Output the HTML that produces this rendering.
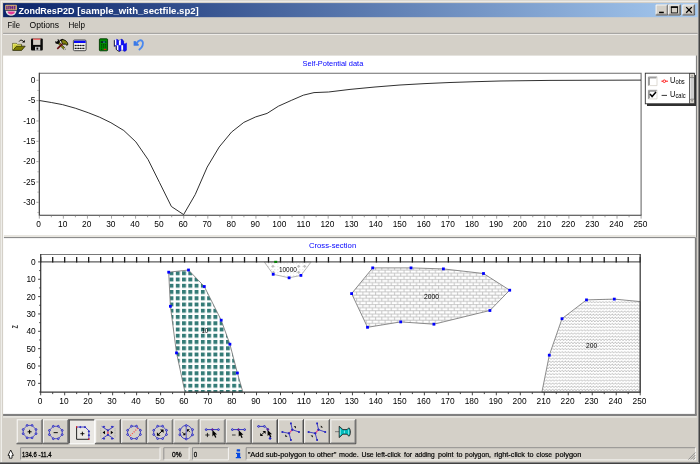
<!DOCTYPE html>
<html><head><meta charset="utf-8"><title>ZondResP2D</title>
<style>
html,body{margin:0;padding:0;background:#d4d0c8;overflow:hidden}
svg{display:block}
text{font-family:"Liberation Sans",sans-serif;fill:#000}
.ui{font-size:9.1px}
.ax{font-size:9px}
</style></head><body>
<svg width="700" height="464" viewBox="0 0 700 464" style="will-change:transform">
<defs>
<linearGradient id="tg" x1="0" x2="1" y1="0" y2="0"><stop offset="0" stop-color="#0a246a"/><stop offset="1" stop-color="#a6caf0"/></linearGradient>
<pattern id="pSq" patternUnits="userSpaceOnUse" x="175.8" y="271.3" width="6.27" height="6.25"><rect width="6.27" height="6.25" fill="#fff"/><rect x="0" y="0" width="3.9" height="3.9" fill="#347b77"/></pattern>
<pattern id="pBr" patternUnits="userSpaceOnUse" x="367.8" y="271.7" width="6.3" height="6.27"><rect width="6.3" height="6.27" fill="#fff"/><path d="M0 1.5H6.3M0 4.63H6.3 M1.5 1.5V4.63 M4.65 4.63V6.27 M4.65 0V1.5" stroke="#b8b8b8" stroke-width="0.8" fill="none"/></pattern>
<pattern id="pWv" patternUnits="userSpaceOnUse" x="580" y="300" width="3.13" height="3.13"><rect width="3.13" height="3.13" fill="#fff"/><path d="M0 2.2L0.78 1.4L2.35 2.9L3.13 2.2" stroke="#a0a0a0" stroke-width="0.7" fill="none"/></pattern>
<pattern id="pDt" patternUnits="userSpaceOnUse" x="264" y="262" width="3.13" height="3.13"><rect width="3.13" height="3.13" fill="#fff"/><rect x="1" y="1" width="0.8" height="0.8" fill="#c8c8c8"/></pattern>
</defs>

<rect width="700" height="464" fill="#d4d0c8"/>
<path d="M1.3 462V1.3H698" stroke="#f3f2ef" stroke-width="1.1" fill="none"/>
<rect x="698" y="0" width="1" height="464" fill="#868686"/><rect x="0" y="462" width="700" height="1" fill="#868686"/>
<rect x="699" y="0" width="1" height="464" fill="#424242"/><rect x="0" y="463" width="700" height="1" fill="#424242"/>
<rect x="3.1" y="3.1" width="694.6" height="14.1" fill="url(#tg)"/>
<text y="13.6" font-size="9.2" font-weight="bold" style="fill:#fff"><tspan x="18.4" textLength="56" lengthAdjust="spacingAndGlyphs">ZondResP2D</tspan> <tspan x="77.3" textLength="121.5" lengthAdjust="spacingAndGlyphs">[sample_with_sectfile.sp2]</tspan></text>
<text class="ui" x="7.6" y="28" textLength="12.3" lengthAdjust="spacingAndGlyphs">File</text>
<text class="ui" x="29.6" y="28" textLength="29.5" lengthAdjust="spacingAndGlyphs">Options</text>
<text class="ui" x="68.4" y="28" textLength="16.6" lengthAdjust="spacingAndGlyphs">Help</text>
<rect x="3.1" y="32.9" width="694.4" height="0.9" fill="#808080"/><rect x="3.1" y="33.8" width="694.4" height="0.8" fill="#fff"/>
<rect x="3.1" y="55.6" width="692.9" height="182" fill="#fff"/>
<rect x="3.1" y="237" width="691.8" height="177" fill="#fff"/>
<rect x="695.9" y="55.6" width="1.05" height="182" fill="#808080"/>
<rect x="694.9" y="238" width="1.8" height="177" fill="#808080"/>
<rect x="3.1" y="413.9" width="693.6" height="2.2" fill="#808080"/>
<rect x="3.1" y="416.1" width="693.6" height="1.6" fill="#e9e7e2"/>
<rect x="3.9" y="235" width="691.8" height="2.1" fill="#e8e6e0"/><rect x="3.9" y="237.1" width="691.8" height="1" fill="#808080"/>
<text x="302.6" y="65.6" font-size="7.9" style="fill:#0000ff" textLength="60.7" lengthAdjust="spacingAndGlyphs">Self-Potential data</text>
<path d="M39.3 73.3H641.1V215.25" stroke="#6c6c6c" stroke-width="1.1" fill="none"/>
<path d="M39.3 72.8V215.25H641.6" stroke="#383838" stroke-width="1.15" fill="none"/>
<path d="M36.4 80.30H38.8 M36.4 100.63H38.8 M36.4 120.97H38.8 M36.4 141.31H38.8 M36.4 161.64H38.8 M36.4 181.98H38.8 M36.4 202.31H38.8 M37.5 90.47H38.8 M37.5 110.80H38.8 M37.5 131.14H38.8 M37.5 151.47H38.8 M37.5 171.81H38.8 M37.5 192.14H38.8 M37.5 212.48H38.8 M39.30 215.75V218.65 M51.34 215.75V217.25 M63.37 215.75V218.65 M75.41 215.75V217.25 M87.44 215.75V218.65 M99.48 215.75V217.25 M111.52 215.75V218.65 M123.55 215.75V217.25 M135.59 215.75V218.65 M147.62 215.75V217.25 M159.66 215.75V218.65 M171.70 215.75V217.25 M183.73 215.75V218.65 M195.77 215.75V217.25 M207.80 215.75V218.65 M219.84 215.75V217.25 M231.88 215.75V218.65 M243.91 215.75V217.25 M255.95 215.75V218.65 M267.98 215.75V217.25 M280.02 215.75V218.65 M292.06 215.75V217.25 M304.09 215.75V218.65 M316.13 215.75V217.25 M328.16 215.75V218.65 M340.20 215.75V217.25 M352.24 215.75V218.65 M364.27 215.75V217.25 M376.31 215.75V218.65 M388.34 215.75V217.25 M400.38 215.75V218.65 M412.42 215.75V217.25 M424.45 215.75V218.65 M436.49 215.75V217.25 M448.52 215.75V218.65 M460.56 215.75V217.25 M472.60 215.75V218.65 M484.63 215.75V217.25 M496.67 215.75V218.65 M508.70 215.75V217.25 M520.74 215.75V218.65 M532.78 215.75V217.25 M544.81 215.75V218.65 M556.85 215.75V217.25 M568.88 215.75V218.65 M580.92 215.75V217.25 M592.96 215.75V218.65 M604.99 215.75V217.25 M617.03 215.75V218.65 M629.06 215.75V217.25 M641.10 215.75V218.65" stroke="#8c8c8c" stroke-width="0.8" fill="none"/>
<text class="ax" x="35.4" y="83.00" text-anchor="end" textLength="4.65" lengthAdjust="spacingAndGlyphs">0</text>
<text class="ax" x="35.4" y="103.33" text-anchor="end" textLength="7.44" lengthAdjust="spacingAndGlyphs">-5</text>
<text class="ax" x="35.4" y="123.67" text-anchor="end" textLength="12.09" lengthAdjust="spacingAndGlyphs">-10</text>
<text class="ax" x="35.4" y="144.00" text-anchor="end" textLength="12.09" lengthAdjust="spacingAndGlyphs">-15</text>
<text class="ax" x="35.4" y="164.34" text-anchor="end" textLength="12.09" lengthAdjust="spacingAndGlyphs">-20</text>
<text class="ax" x="35.4" y="184.68" text-anchor="end" textLength="12.09" lengthAdjust="spacingAndGlyphs">-25</text>
<text class="ax" x="35.4" y="205.01" text-anchor="end" textLength="12.09" lengthAdjust="spacingAndGlyphs">-30</text>
<text class="ax" x="38.60" y="226.9" text-anchor="middle" textLength="4.65" lengthAdjust="spacingAndGlyphs">0</text>
<text class="ax" x="62.67" y="226.9" text-anchor="middle" textLength="9.31" lengthAdjust="spacingAndGlyphs">10</text>
<text class="ax" x="86.74" y="226.9" text-anchor="middle" textLength="9.31" lengthAdjust="spacingAndGlyphs">20</text>
<text class="ax" x="110.82" y="226.9" text-anchor="middle" textLength="9.31" lengthAdjust="spacingAndGlyphs">30</text>
<text class="ax" x="134.89" y="226.9" text-anchor="middle" textLength="9.31" lengthAdjust="spacingAndGlyphs">40</text>
<text class="ax" x="158.96" y="226.9" text-anchor="middle" textLength="9.31" lengthAdjust="spacingAndGlyphs">50</text>
<text class="ax" x="183.03" y="226.9" text-anchor="middle" textLength="9.31" lengthAdjust="spacingAndGlyphs">60</text>
<text class="ax" x="207.10" y="226.9" text-anchor="middle" textLength="9.31" lengthAdjust="spacingAndGlyphs">70</text>
<text class="ax" x="231.18" y="226.9" text-anchor="middle" textLength="9.31" lengthAdjust="spacingAndGlyphs">80</text>
<text class="ax" x="255.25" y="226.9" text-anchor="middle" textLength="9.31" lengthAdjust="spacingAndGlyphs">90</text>
<text class="ax" x="279.32" y="226.9" text-anchor="middle" textLength="13.96" lengthAdjust="spacingAndGlyphs">100</text>
<text class="ax" x="303.39" y="226.9" text-anchor="middle" textLength="13.96" lengthAdjust="spacingAndGlyphs">110</text>
<text class="ax" x="327.46" y="226.9" text-anchor="middle" textLength="13.96" lengthAdjust="spacingAndGlyphs">120</text>
<text class="ax" x="351.54" y="226.9" text-anchor="middle" textLength="13.96" lengthAdjust="spacingAndGlyphs">130</text>
<text class="ax" x="375.61" y="226.9" text-anchor="middle" textLength="13.96" lengthAdjust="spacingAndGlyphs">140</text>
<text class="ax" x="399.68" y="226.9" text-anchor="middle" textLength="13.96" lengthAdjust="spacingAndGlyphs">150</text>
<text class="ax" x="423.75" y="226.9" text-anchor="middle" textLength="13.96" lengthAdjust="spacingAndGlyphs">160</text>
<text class="ax" x="447.82" y="226.9" text-anchor="middle" textLength="13.96" lengthAdjust="spacingAndGlyphs">170</text>
<text class="ax" x="471.90" y="226.9" text-anchor="middle" textLength="13.96" lengthAdjust="spacingAndGlyphs">180</text>
<text class="ax" x="495.97" y="226.9" text-anchor="middle" textLength="13.96" lengthAdjust="spacingAndGlyphs">190</text>
<text class="ax" x="520.04" y="226.9" text-anchor="middle" textLength="13.96" lengthAdjust="spacingAndGlyphs">200</text>
<text class="ax" x="544.11" y="226.9" text-anchor="middle" textLength="13.96" lengthAdjust="spacingAndGlyphs">210</text>
<text class="ax" x="568.18" y="226.9" text-anchor="middle" textLength="13.96" lengthAdjust="spacingAndGlyphs">220</text>
<text class="ax" x="592.26" y="226.9" text-anchor="middle" textLength="13.96" lengthAdjust="spacingAndGlyphs">230</text>
<text class="ax" x="616.33" y="226.9" text-anchor="middle" textLength="13.96" lengthAdjust="spacingAndGlyphs">240</text>
<text class="ax" x="640.40" y="226.9" text-anchor="middle" textLength="13.96" lengthAdjust="spacingAndGlyphs">250</text>
<polyline points="39.3,100.5 51.3,102.5 62.4,104.6 75.3,108.2 88.2,112.7 99.6,117.2 110.9,122.7 123.8,130.5 135.8,141.8 148.1,159.6 159.4,182.3 171.4,206.5 183.6,214.6 195.2,194.6 207.2,167.1 219.2,147 231.5,132.1 243.8,122.4 255.7,116.9 267.1,113.4 278.4,106.2 291.3,100.4 303.3,95.2 314,92.6 328.5,92 350,89.4 375,87 400,85 425,83.6 450,82.5 475,81.7 500,81 550,80.4 641,80.1" fill="none" stroke="#181818" stroke-width="0.9"/>
<rect x="647" y="75" width="49" height="31" fill="#303030"/>
<rect x="645.3" y="73.2" width="49" height="30.6" fill="#fff" stroke="#303030" stroke-width="0.9"/>
<rect x="689.65" y="73.6" width="4.8" height="29.8" fill="#cdcdcd" stroke="#2c2c2c" stroke-width="0.7"/>
<rect x="690" y="74" width="4.1" height="3.5" fill="#d8d5ce"/><rect x="690" y="99.3" width="4.1" height="3.8" fill="#d8d5ce"/>
<path d="M690 77.6H694.1M690 99.2H694.1" stroke="#555" stroke-width="0.6"/><path d="M690.5 78V99" stroke="#f2f2f2" stroke-width="0.6"/>
<path d="M691.2 76.3L692.05 75.2L692.9 76.3Z M691.2 100.6L692.05 101.7L692.9 100.6Z" fill="#333"/>
<rect x="648.4" y="77" width="8.8" height="8.8" fill="#fff"/>
<path d="M648.4 85.8V77H657.2" stroke="#8c8c8c" stroke-width="0.85" fill="none"/>
<path d="M649.3 85V77.9H656.4" stroke="#5a5a5a" stroke-width="0.7" fill="none"/>
<path d="M648.8 85.6H657V77.4" stroke="#d4d0c8" stroke-width="0.8" fill="none"/>
<rect x="648.4" y="90.3" width="8.8" height="8.8" fill="#fff"/>
<path d="M648.4 99.1V90.3H657.2" stroke="#8c8c8c" stroke-width="0.85" fill="none"/>
<path d="M649.3 98.3V91.2H656.4" stroke="#5a5a5a" stroke-width="0.7" fill="none"/>
<path d="M648.8 98.89999999999999H657V90.7" stroke="#d4d0c8" stroke-width="0.8" fill="none"/>
<path d="M650 94l2.1 2.5 3.9-4.4" stroke="#000" stroke-width="1.5" fill="none"/>
<path d="M661.4 81.2H668" stroke="#ff0000" stroke-width="0.9"/><circle cx="664.3" cy="81.2" r="1.3" fill="#fff" stroke="#ff0000" stroke-width="0.8"/>
<path d="M661.6 95.4H667" stroke="#202020" stroke-width="0.9"/>
<text transform="translate(670.1,83.4) scale(0.84,1)" font-size="8.8">U<tspan font-size="6.9" dy="0.7">obs</tspan></text>
<text transform="translate(670.1,97) scale(0.84,1)" font-size="8.8">U<tspan font-size="6.9" dy="0.7">calc</tspan></text>
<text x="308.9" y="247.6" font-size="7.9" style="fill:#0000ff" textLength="47.3" lengthAdjust="spacingAndGlyphs">Cross-section</text>
<polygon points="168.7,272.2 188.5,270 204.3,286.5 221.2,320.2 229.9,344.2 237.4,373 242.9,392.2 185,392.2 176.5,352.9 170.4,306.3" fill="url(#pSq)" stroke="#707070" stroke-width="0.8"/>
<rect x="167.3" y="270.8" width="2.8" height="2.8" fill="#0000ff"/>
<rect x="187.1" y="268.6" width="2.8" height="2.8" fill="#0000ff"/>
<rect x="202.9" y="285.1" width="2.8" height="2.8" fill="#0000ff"/>
<rect x="219.8" y="318.8" width="2.8" height="2.8" fill="#0000ff"/>
<rect x="228.5" y="342.8" width="2.8" height="2.8" fill="#0000ff"/>
<rect x="236.0" y="371.6" width="2.8" height="2.8" fill="#0000ff"/>
<rect x="175.1" y="351.5" width="2.8" height="2.8" fill="#0000ff"/>
<rect x="169.0" y="304.9" width="2.8" height="2.8" fill="#0000ff"/>
<polygon points="264.3,262 311.1,262 300.9,275.4 289.1,277.8 273.2,274.3" fill="url(#pDt)" stroke="#9c9c9c" stroke-width="0.75"/>
<path d="M271.29999999999995 266.3L272.9 264.7L274.5 266.3L272.9 267.90000000000003Z" fill="#bcbcbc"/>
<path d="M297.0 266.3L298.6 264.7L300.20000000000005 266.3L298.6 267.90000000000003Z" fill="#bcbcbc"/>
<path d="M303.0 266.3L304.6 264.7L306.20000000000005 266.3L304.6 267.90000000000003Z" fill="#bcbcbc"/>
<path d="M297.0 272.3L298.6 270.7L300.20000000000005 272.3L298.6 273.90000000000003Z" fill="#bcbcbc"/>
<path d="M271.79999999999995 272.3L273.4 270.7L275.0 272.3L273.4 273.90000000000003Z" fill="#bcbcbc"/>
<rect x="299.5" y="274.0" width="2.8" height="2.8" fill="#0000ff"/>
<rect x="287.7" y="276.4" width="2.8" height="2.8" fill="#0000ff"/>
<rect x="271.8" y="272.9" width="2.8" height="2.8" fill="#0000ff"/>
<polygon points="372.7,267.9 411,267.9 443.4,268.9 483.5,273.5 509.7,290.2 489.9,310.5 433.9,324.2 400.7,321.9 367.5,327.3 351.6,293.6" fill="url(#pBr)" stroke="#707070" stroke-width="0.8"/>
<rect x="371.3" y="266.5" width="2.8" height="2.8" fill="#0000ff"/>
<rect x="409.6" y="266.5" width="2.8" height="2.8" fill="#0000ff"/>
<rect x="442.0" y="267.5" width="2.8" height="2.8" fill="#0000ff"/>
<rect x="482.1" y="272.1" width="2.8" height="2.8" fill="#0000ff"/>
<rect x="508.3" y="288.8" width="2.8" height="2.8" fill="#0000ff"/>
<rect x="488.5" y="309.1" width="2.8" height="2.8" fill="#0000ff"/>
<rect x="432.5" y="322.8" width="2.8" height="2.8" fill="#0000ff"/>
<rect x="399.3" y="320.5" width="2.8" height="2.8" fill="#0000ff"/>
<rect x="366.1" y="325.9" width="2.8" height="2.8" fill="#0000ff"/>
<rect x="350.2" y="292.2" width="2.8" height="2.8" fill="#0000ff"/>
<polygon points="541.9,392.2 549.3,355.2 562,318.7 586.5,299.9 614.3,299.1 640.2,301.6 640.2,392.2" fill="url(#pWv)" stroke="#707070" stroke-width="0.8"/>
<rect x="547.9" y="353.8" width="2.8" height="2.8" fill="#0000ff"/>
<rect x="560.6" y="317.3" width="2.8" height="2.8" fill="#0000ff"/>
<rect x="585.1" y="298.5" width="2.8" height="2.8" fill="#0000ff"/>
<rect x="612.9" y="297.7" width="2.8" height="2.8" fill="#0000ff"/>
<rect x="279.2" y="265.6" width="17.6" height="6.6" fill="#fff"/>
<text x="287.9" y="271.6" font-size="7.9" text-anchor="middle" textLength="18" lengthAdjust="spacingAndGlyphs">10000</text>
<text x="204.8" y="332.6" font-size="7.4" text-anchor="middle" textLength="6.8" lengthAdjust="spacingAndGlyphs">10</text>
<text x="431.6" y="299.3" font-size="7.4" text-anchor="middle" textLength="15" lengthAdjust="spacingAndGlyphs">2000</text>
<text x="591.6" y="347.9" font-size="7.4" text-anchor="middle" textLength="11.2" lengthAdjust="spacingAndGlyphs">200</text>
<path d="M40.7 254.55H640.2" stroke="#787878" stroke-width="1.1" fill="none"/>
<path d="M40.7 261.9H640.2" stroke="#5c5c5c" stroke-width="1.4" fill="none"/>
<path d="M40.70 257.1V262.4 M52.69 257.1V262.4 M64.68 257.1V262.4 M76.67 257.1V262.4 M88.66 257.1V262.4 M100.65 257.1V262.4 M112.64 257.1V262.4 M124.63 257.1V262.4 M136.62 257.1V262.4 M148.61 257.1V262.4 M160.60 257.1V262.4 M172.59 257.1V262.4 M184.58 257.1V262.4 M196.57 257.1V262.4 M208.56 257.1V262.4 M220.55 257.1V262.4 M232.54 257.1V262.4 M244.53 257.1V262.4 M256.52 257.1V262.4 M268.51 257.1V262.4 M280.50 257.1V262.4 M292.49 257.1V262.4 M304.48 257.1V262.4 M316.47 257.1V262.4 M328.46 257.1V262.4 M340.45 257.1V262.4 M352.44 257.1V262.4 M364.43 257.1V262.4 M376.42 257.1V262.4 M388.41 257.1V262.4 M400.40 257.1V262.4 M412.39 257.1V262.4 M424.38 257.1V262.4 M436.37 257.1V262.4 M448.36 257.1V262.4 M460.35 257.1V262.4 M472.34 257.1V262.4 M484.33 257.1V262.4 M496.32 257.1V262.4 M508.31 257.1V262.4 M520.30 257.1V262.4 M532.29 257.1V262.4 M544.28 257.1V262.4 M556.27 257.1V262.4 M568.26 257.1V262.4 M580.25 257.1V262.4 M592.24 257.1V262.4 M604.23 257.1V262.4 M616.22 257.1V262.4 M628.21 257.1V262.4 M640.20 257.1V262.4" stroke="#1c1c1c" stroke-width="1.3" fill="none"/>
<path d="M40.7 254.05V392.2H640.2V254.05" stroke="#3a3a3a" stroke-width="1.25" fill="none"/>
<rect x="274.2" y="260.8" width="3" height="2.1" fill="#008000"/>
<path d="M38.1 261.90H40.7 M39.2 270.57H40.7 M38.1 279.25H40.7 M39.2 287.92H40.7 M38.1 296.60H40.7 M39.2 305.27H40.7 M38.1 313.95H40.7 M39.2 322.62H40.7 M38.1 331.30H40.7 M39.2 339.97H40.7 M38.1 348.65H40.7 M39.2 357.32H40.7 M38.1 366.00H40.7 M39.2 374.67H40.7 M38.1 383.35H40.7 M39.2 392.02H40.7 M40.70 392.2v3.1 M52.69 392.2v1.9 M64.68 392.2v3.1 M76.67 392.2v1.9 M88.66 392.2v3.1 M100.65 392.2v1.9 M112.64 392.2v3.1 M124.63 392.2v1.9 M136.62 392.2v3.1 M148.61 392.2v1.9 M160.60 392.2v3.1 M172.59 392.2v1.9 M184.58 392.2v3.1 M196.57 392.2v1.9 M208.56 392.2v3.1 M220.55 392.2v1.9 M232.54 392.2v3.1 M244.53 392.2v1.9 M256.52 392.2v3.1 M268.51 392.2v1.9 M280.50 392.2v3.1 M292.49 392.2v1.9 M304.48 392.2v3.1 M316.47 392.2v1.9 M328.46 392.2v3.1 M340.45 392.2v1.9 M352.44 392.2v3.1 M364.43 392.2v1.9 M376.42 392.2v3.1 M388.41 392.2v1.9 M400.40 392.2v3.1 M412.39 392.2v1.9 M424.38 392.2v3.1 M436.37 392.2v1.9 M448.36 392.2v3.1 M460.35 392.2v1.9 M472.34 392.2v3.1 M484.33 392.2v1.9 M496.32 392.2v3.1 M508.31 392.2v1.9 M520.30 392.2v3.1 M532.29 392.2v1.9 M544.28 392.2v3.1 M556.27 392.2v1.9 M568.26 392.2v3.1 M580.25 392.2v1.9 M592.24 392.2v3.1 M604.23 392.2v1.9 M616.22 392.2v3.1 M628.21 392.2v1.9 M640.20 392.2v3.1" stroke="#303030" stroke-width="0.9" fill="none"/>
<text class="ax" x="35.7" y="264.90" text-anchor="end" textLength="4.65" lengthAdjust="spacingAndGlyphs">0</text>
<text class="ax" x="35.7" y="282.25" text-anchor="end" textLength="9.31" lengthAdjust="spacingAndGlyphs">10</text>
<text class="ax" x="35.7" y="299.60" text-anchor="end" textLength="9.31" lengthAdjust="spacingAndGlyphs">20</text>
<text class="ax" x="35.7" y="316.95" text-anchor="end" textLength="9.31" lengthAdjust="spacingAndGlyphs">30</text>
<text class="ax" x="35.7" y="334.30" text-anchor="end" textLength="9.31" lengthAdjust="spacingAndGlyphs">40</text>
<text class="ax" x="35.7" y="351.65" text-anchor="end" textLength="9.31" lengthAdjust="spacingAndGlyphs">50</text>
<text class="ax" x="35.7" y="369.00" text-anchor="end" textLength="9.31" lengthAdjust="spacingAndGlyphs">60</text>
<text class="ax" x="35.7" y="386.35" text-anchor="end" textLength="9.31" lengthAdjust="spacingAndGlyphs">70</text>
<text class="ax" x="40.00" y="403.9" text-anchor="middle" textLength="4.65" lengthAdjust="spacingAndGlyphs">0</text>
<text class="ax" x="63.98" y="403.9" text-anchor="middle" textLength="9.31" lengthAdjust="spacingAndGlyphs">10</text>
<text class="ax" x="87.96" y="403.9" text-anchor="middle" textLength="9.31" lengthAdjust="spacingAndGlyphs">20</text>
<text class="ax" x="111.94" y="403.9" text-anchor="middle" textLength="9.31" lengthAdjust="spacingAndGlyphs">30</text>
<text class="ax" x="135.92" y="403.9" text-anchor="middle" textLength="9.31" lengthAdjust="spacingAndGlyphs">40</text>
<text class="ax" x="159.90" y="403.9" text-anchor="middle" textLength="9.31" lengthAdjust="spacingAndGlyphs">50</text>
<text class="ax" x="183.88" y="403.9" text-anchor="middle" textLength="9.31" lengthAdjust="spacingAndGlyphs">60</text>
<text class="ax" x="207.86" y="403.9" text-anchor="middle" textLength="9.31" lengthAdjust="spacingAndGlyphs">70</text>
<text class="ax" x="231.84" y="403.9" text-anchor="middle" textLength="9.31" lengthAdjust="spacingAndGlyphs">80</text>
<text class="ax" x="255.82" y="403.9" text-anchor="middle" textLength="9.31" lengthAdjust="spacingAndGlyphs">90</text>
<text class="ax" x="279.80" y="403.9" text-anchor="middle" textLength="13.96" lengthAdjust="spacingAndGlyphs">100</text>
<text class="ax" x="303.78" y="403.9" text-anchor="middle" textLength="13.96" lengthAdjust="spacingAndGlyphs">110</text>
<text class="ax" x="327.76" y="403.9" text-anchor="middle" textLength="13.96" lengthAdjust="spacingAndGlyphs">120</text>
<text class="ax" x="351.74" y="403.9" text-anchor="middle" textLength="13.96" lengthAdjust="spacingAndGlyphs">130</text>
<text class="ax" x="375.72" y="403.9" text-anchor="middle" textLength="13.96" lengthAdjust="spacingAndGlyphs">140</text>
<text class="ax" x="399.70" y="403.9" text-anchor="middle" textLength="13.96" lengthAdjust="spacingAndGlyphs">150</text>
<text class="ax" x="423.68" y="403.9" text-anchor="middle" textLength="13.96" lengthAdjust="spacingAndGlyphs">160</text>
<text class="ax" x="447.66" y="403.9" text-anchor="middle" textLength="13.96" lengthAdjust="spacingAndGlyphs">170</text>
<text class="ax" x="471.64" y="403.9" text-anchor="middle" textLength="13.96" lengthAdjust="spacingAndGlyphs">180</text>
<text class="ax" x="495.62" y="403.9" text-anchor="middle" textLength="13.96" lengthAdjust="spacingAndGlyphs">190</text>
<text class="ax" x="519.60" y="403.9" text-anchor="middle" textLength="13.96" lengthAdjust="spacingAndGlyphs">200</text>
<text class="ax" x="543.58" y="403.9" text-anchor="middle" textLength="13.96" lengthAdjust="spacingAndGlyphs">210</text>
<text class="ax" x="567.56" y="403.9" text-anchor="middle" textLength="13.96" lengthAdjust="spacingAndGlyphs">220</text>
<text class="ax" x="591.54" y="403.9" text-anchor="middle" textLength="13.96" lengthAdjust="spacingAndGlyphs">230</text>
<text class="ax" x="615.52" y="403.9" text-anchor="middle" textLength="13.96" lengthAdjust="spacingAndGlyphs">240</text>
<text class="ax" x="639.50" y="403.9" text-anchor="middle" textLength="13.96" lengthAdjust="spacingAndGlyphs">250</text>
<text x="0" y="0" font-size="10.4" font-weight="bold" text-anchor="middle" style="fill:#4a4a4a" transform="translate(17.9,326.9) rotate(-90) scale(0.66,1)">z</text>
<g>
<rect x="5.1" y="4.8" width="11.9" height="5.5" rx="0.9" fill="#c9a473"/>
<path d="M6.9 6v3.3 M8.9 6v3.3 M10.8 6v3.3 M12.7 6v3.3 M14.7 6v3.3" stroke="#5a148a" stroke-width="1.25" opacity="0.9"/><path d="M6.3 8.9H7.6M8.6 6.3H9.8M10.4 7.6H13.2M14.2 6.3H15.4" stroke="#5a148a" stroke-width="0.8" opacity="0.75"/>
<path d="M5.7 10.7H16.5C16.3 13.4 14.4 15.7 11.1 15.7C7.8 15.7 5.9 13.4 5.7 10.7Z" fill="#e2e2e2"/>
<path d="M5.6 10.5H16.6" stroke="#4a4a4a" stroke-width="0.6"/>
<path d="M7.7 11.6H14.7V12.6C14.3 13.8 13 14.4 11.2 14.4C9.4 14.4 8.1 13.8 7.7 12.6Z" fill="#e63a98"/>
<path d="M7.8 16.2H14.4" stroke="#111" stroke-width="0.7" opacity="0.55"/>
</g>
<rect x="655.7" y="4.6" width="12.5" height="10.8" fill="#d4d0c8"/>
<path d="M656.1 15.4V5.0H668.2" stroke="#fff" stroke-width="0.8" fill="none"/>
<path d="M667.8000000000001 4.6V15.0H655.7" stroke="#404040" stroke-width="0.8" fill="none"/>
<path d="M667.0 5.3999999999999995V14.200000000000001H656.5" stroke="#808080" stroke-width="0.8" fill="none"/>
<rect x="668.2" y="4.6" width="12.5" height="10.8" fill="#d4d0c8"/>
<path d="M668.6 15.4V5.0H680.7" stroke="#fff" stroke-width="0.8" fill="none"/>
<path d="M680.3000000000001 4.6V15.0H668.2" stroke="#404040" stroke-width="0.8" fill="none"/>
<path d="M679.5 5.3999999999999995V14.200000000000001H669.0" stroke="#808080" stroke-width="0.8" fill="none"/>
<rect x="682.4" y="4.6" width="12.6" height="10.8" fill="#d4d0c8"/>
<path d="M682.8 15.4V5.0H695.0" stroke="#fff" stroke-width="0.8" fill="none"/>
<path d="M694.6 4.6V15.0H682.4" stroke="#404040" stroke-width="0.8" fill="none"/>
<path d="M693.8 5.3999999999999995V14.200000000000001H683.1999999999999" stroke="#808080" stroke-width="0.8" fill="none"/>
<rect x="659.1" y="11.7" width="4.7" height="1.5" fill="#000"/>
<rect x="671.3" y="7" width="6.3" height="5.9" fill="none" stroke="#000" stroke-width="0.8"/><rect x="670.9" y="6.4" width="7.1" height="1.5" fill="#000"/>
<path d="M686.2 7.1L691.8 12.7M691.8 7.1L686.2 12.7" stroke="#000" stroke-width="1.3"/>
<path d="M12.6 50.2V43.4H16.4L17.4 44.4H21.6V46.4" fill="#d2d23c" stroke="#3a3a10" stroke-width="0.7"/>
<path d="M12.8 50.4L16.6 46.2H25.2L21.6 50.4Z" fill="#7c7c00" stroke="#1a1a00" stroke-width="0.7"/>
<path d="M13.2 49.4V44H16.2L17.2 45H21" fill="none" stroke="#ffff9a" stroke-width="0.6"/>
<path d="M19.2 41.4C20.2 39.8 22.4 39.6 23.8 42" fill="none" stroke="#000" stroke-width="1"/><path d="M22 42.6H24.8V40Z" fill="#000"/>
<rect x="31" y="38.6" width="11.8" height="12" rx="1" fill="#0a0a0a"/>
<rect x="33.1" y="38.7" width="7.3" height="6.2" fill="#d4d0c8"/><rect x="33.1" y="38.6" width="7.3" height="1.2" fill="#f05858"/>
<rect x="35" y="46.8" width="5.2" height="3.8" fill="#c8c8c8"/><rect x="36.5" y="47.6" width="1.7" height="2" fill="#0a0a0a"/>
<path d="M58.8 43L64.6 49" stroke="#1c1c00" stroke-width="2.3"/><path d="M58.8 43L64.4 48.8" stroke="#9a9a1c" stroke-width="1.2"/>
<path d="M64.4 48.4L65.6 49.6" stroke="#e8e8e8" stroke-width="1.3"/><path d="M64.9 49.9L66 48.9" stroke="#222" stroke-width="0.5"/>
<circle cx="57.5" cy="41.7" r="2.4" fill="#080808"/><circle cx="56.3" cy="40.2" r="1.45" fill="#d4d0c8"/>
<path d="M57.3 48.9L62.7 43.5" stroke="#66080f" stroke-width="1.55"/>
<path d="M60.4 40.3L62.6 39.4L65.6 40.6L67.6 43L67.8 44.8L66.4 45.2L65.4 43.8L63.6 44.4L62 42.6L61.6 41.2Z" fill="#84840e" stroke="#0c0c00" stroke-width="0.9" stroke-linejoin="round"/>
<path d="M60.2 40.4L62.8 39.5" stroke="#000" stroke-width="1.1"/>
<rect x="73.4" y="40" width="12.7" height="10.7" rx="1.2" fill="#e6e6e6" stroke="#4c4c4c" stroke-width="1"/>
<rect x="74" y="40.7" width="11.6" height="2.3" fill="#0808f8"/>
<path d="M74.2 43.5H85.4" stroke="#f4f4e0" stroke-width="0.7"/>
<path d="M79.4 43.2V50" stroke="#fff" stroke-width="1"/><path d="M77 43.4V50M82 43.4V50" stroke="#f8f8f8" stroke-width="0.7"/>
<path d="M74.6 45.5H84.8M74.6 48.4H84.8" stroke="#6a6a6a" stroke-width="0.9"/>
<rect x="74.89999999999999" y="44.9" width="1.4" height="1.2" fill="#181818"/>
<rect x="74.89999999999999" y="47.8" width="1.4" height="1.2" fill="#181818"/>
<rect x="77.6" y="44.9" width="1.4" height="1.2" fill="#181818"/>
<rect x="77.6" y="47.8" width="1.4" height="1.2" fill="#181818"/>
<rect x="79.8" y="44.9" width="1.4" height="1.2" fill="#181818"/>
<rect x="79.8" y="47.8" width="1.4" height="1.2" fill="#181818"/>
<rect x="82.5" y="44.9" width="1.4" height="1.2" fill="#181818"/>
<rect x="82.5" y="47.8" width="1.4" height="1.2" fill="#181818"/>
<rect x="99.4" y="38.8" width="8.2" height="12" rx="0.8" fill="#008a00" stroke="#003800" stroke-width="0.9"/>
<rect x="100.8" y="41.2" width="5.4" height="1.8" fill="#062a20"/><rect x="103" y="41.6" width="2.2" height="1" fill="#30a0a0"/>
<path d="M101 44.9h1.2M103 44.9h1.2M105 44.9h1.2M101 47h1.2M103 47h1.2M105 47h1.2M101 49.2h1.2" stroke="#003a00" stroke-width="1.1"/><rect x="103.8" y="48.8" width="2.4" height="1.2" fill="#e02010"/>
<clipPath id="wc"><path d="M114.3 40.2L115.4 39.2L116.6 38.9L117.8 39.4L119 40.5L120.2 39.4L121.5 38.9L122.8 39.6L124 41.6V43.6L125.4 43.6L126.8 42.6V50L125.6 51.2L124.4 51.5L123.2 50.8L122 49.8L120.8 50.9L119.6 51.5L118.2 51L116.2 49.4V46L115.2 46.6L114.3 46.6Z"/></clipPath>
<g clip-path="url(#wc)"><rect x="113" y="38" width="15" height="14" fill="#1212f0"/>
<rect x="114.7" y="38" width="1.6" height="7.2" fill="#fff"/><rect x="118.9" y="38" width="1.9" height="7.2" fill="#fff"/>
<rect x="116.7" y="45.2" width="1.7" height="7" fill="#fff"/><rect x="121.3" y="45.2" width="1.8" height="7" fill="#fff"/>
</g>
<path d="M114.3 40.2V46.6M116.2 46V49.4L118.2 51L119.6 51.5" stroke="#111" stroke-width="0.8" fill="none"/>
<path d="M116.6 38.9L119 40.5L121.5 38.9L124 41.6M119.6 51.5L122 49.8L124.4 51.5L126.8 50" stroke="#202060" stroke-width="0.5" fill="none" opacity="0.6"/>
<path d="M133.6 41.2L135.4 41L138.9 44.6L138.6 45.8H133.6Z" fill="#3a78e6"/>
<path d="M137 42.8C138.4 40.2 141.4 39.4 142.6 41.6C143.7 43.8 142.4 47.4 139.4 49.5" fill="none" stroke="#4a88ee" stroke-width="1.9" stroke-linecap="round"/>
<path d="M17.25 443.7V419.7H42.2" stroke="#f8f7f5" stroke-width="1.1" fill="none"/>
<path d="M42.25 419.3V443.75H16.5" stroke="#404040" stroke-width="1" fill="none"/>
<path d="M41.400000000000006 420.1V442.9H17.3" stroke="#808080" stroke-width="0.9" fill="none"/>
<path d="M43.379999999999995 443.7V419.7H68.33" stroke="#f8f7f5" stroke-width="1.1" fill="none"/>
<path d="M68.38 419.3V443.75H42.629999999999995" stroke="#404040" stroke-width="1" fill="none"/>
<path d="M67.53 420.1V442.9H43.42999999999999" stroke="#808080" stroke-width="0.9" fill="none"/>
<rect x="68.75999999999999" y="419.3" width="26.2" height="24.899999999999977" fill="#eae8e4"/>
<path d="M69.25999999999999 444.2V419.8H94.96" stroke="#4a4a4a" stroke-width="1.2" fill="none"/>
<path d="M94.55999999999999 419.3V443.8H68.75999999999999" stroke="#fff" stroke-width="0.9" fill="none"/>
<path d="M95.64 443.7V419.7H120.59" stroke="#f8f7f5" stroke-width="1.1" fill="none"/>
<path d="M120.64 419.3V443.75H94.89" stroke="#404040" stroke-width="1" fill="none"/>
<path d="M119.79 420.1V442.9H95.69" stroke="#808080" stroke-width="0.9" fill="none"/>
<path d="M121.77 443.7V419.7H146.72" stroke="#f8f7f5" stroke-width="1.1" fill="none"/>
<path d="M146.77 419.3V443.75H121.02" stroke="#404040" stroke-width="1" fill="none"/>
<path d="M145.92 420.1V442.9H121.82" stroke="#808080" stroke-width="0.9" fill="none"/>
<path d="M147.9 443.7V419.7H172.85" stroke="#f8f7f5" stroke-width="1.1" fill="none"/>
<path d="M172.9 419.3V443.75H147.15" stroke="#404040" stroke-width="1" fill="none"/>
<path d="M172.04999999999998 420.1V442.9H147.95000000000002" stroke="#808080" stroke-width="0.9" fill="none"/>
<path d="M174.03 443.7V419.7H198.98" stroke="#f8f7f5" stroke-width="1.1" fill="none"/>
<path d="M199.03 419.3V443.75H173.28" stroke="#404040" stroke-width="1" fill="none"/>
<path d="M198.17999999999998 420.1V442.9H174.08" stroke="#808080" stroke-width="0.9" fill="none"/>
<path d="M200.16 443.7V419.7H225.10999999999999" stroke="#f8f7f5" stroke-width="1.1" fill="none"/>
<path d="M225.16 419.3V443.75H199.41" stroke="#404040" stroke-width="1" fill="none"/>
<path d="M224.30999999999997 420.1V442.9H200.21" stroke="#808080" stroke-width="0.9" fill="none"/>
<path d="M226.29 443.7V419.7H251.23999999999998" stroke="#f8f7f5" stroke-width="1.1" fill="none"/>
<path d="M251.29 419.3V443.75H225.54" stroke="#404040" stroke-width="1" fill="none"/>
<path d="M250.43999999999997 420.1V442.9H226.34" stroke="#808080" stroke-width="0.9" fill="none"/>
<path d="M252.42 443.7V419.7H277.37" stroke="#f8f7f5" stroke-width="1.1" fill="none"/>
<path d="M277.42 419.3V443.75H251.67" stroke="#404040" stroke-width="1" fill="none"/>
<path d="M276.57 420.1V442.9H252.47" stroke="#808080" stroke-width="0.9" fill="none"/>
<path d="M278.55 443.7V419.7H303.5" stroke="#f8f7f5" stroke-width="1.1" fill="none"/>
<path d="M303.55 419.3V443.75H277.8" stroke="#404040" stroke-width="1" fill="none"/>
<path d="M302.7 420.1V442.9H278.6" stroke="#808080" stroke-width="0.9" fill="none"/>
<path d="M304.68 443.7V419.7H329.63" stroke="#f8f7f5" stroke-width="1.1" fill="none"/>
<path d="M329.68 419.3V443.75H303.93" stroke="#404040" stroke-width="1" fill="none"/>
<path d="M328.83 420.1V442.9H304.73" stroke="#808080" stroke-width="0.9" fill="none"/>
<path d="M330.81 443.7V419.7H355.76" stroke="#f8f7f5" stroke-width="1.1" fill="none"/>
<path d="M355.81 419.3V443.75H330.06" stroke="#404040" stroke-width="1" fill="none"/>
<path d="M354.96 420.1V442.9H330.86" stroke="#808080" stroke-width="0.9" fill="none"/>
<polygon points="27.10,425.40 32.10,425.40 36.00,429.50 36.00,433.70 32.10,437.80 27.10,437.80 23.20,433.70 23.20,429.50" fill="none" stroke="#2222c0" stroke-width="0.7"/>
<circle cx="27.10" cy="425.40" r="0.9" fill="#b8b8e0" stroke="#2222c0" stroke-width="0.9"/>
<circle cx="32.10" cy="425.40" r="0.9" fill="#b8b8e0" stroke="#2222c0" stroke-width="0.9"/>
<circle cx="36.00" cy="429.50" r="0.9" fill="#b8b8e0" stroke="#2222c0" stroke-width="0.9"/>
<circle cx="36.00" cy="433.70" r="0.9" fill="#b8b8e0" stroke="#2222c0" stroke-width="0.9"/>
<circle cx="32.10" cy="437.80" r="0.9" fill="#b8b8e0" stroke="#2222c0" stroke-width="0.9"/>
<circle cx="27.10" cy="437.80" r="0.9" fill="#b8b8e0" stroke="#2222c0" stroke-width="0.9"/>
<circle cx="23.20" cy="433.70" r="0.9" fill="#b8b8e0" stroke="#2222c0" stroke-width="0.9"/>
<circle cx="23.20" cy="429.50" r="0.9" fill="#b8b8e0" stroke="#2222c0" stroke-width="0.9"/>
<path d="M27.6 431.8H31.6M29.6 429.8V433.8" stroke="#000" stroke-width="1"/>
<polygon points="53.30,426.30 58.30,426.30 62.20,430.40 62.20,434.60 58.30,438.70 53.30,438.70 49.40,434.60 49.40,430.40" fill="none" stroke="#2222c0" stroke-width="0.7"/>
<circle cx="53.30" cy="426.30" r="0.9" fill="#b8b8e0" stroke="#2222c0" stroke-width="0.9"/>
<circle cx="58.30" cy="426.30" r="0.9" fill="#b8b8e0" stroke="#2222c0" stroke-width="0.9"/>
<circle cx="62.20" cy="430.40" r="0.9" fill="#b8b8e0" stroke="#2222c0" stroke-width="0.9"/>
<circle cx="62.20" cy="434.60" r="0.9" fill="#b8b8e0" stroke="#2222c0" stroke-width="0.9"/>
<circle cx="58.30" cy="438.70" r="0.9" fill="#b8b8e0" stroke="#2222c0" stroke-width="0.9"/>
<circle cx="53.30" cy="438.70" r="0.9" fill="#b8b8e0" stroke="#2222c0" stroke-width="0.9"/>
<circle cx="49.40" cy="434.60" r="0.9" fill="#b8b8e0" stroke="#2222c0" stroke-width="0.9"/>
<circle cx="49.40" cy="430.40" r="0.9" fill="#b8b8e0" stroke="#2222c0" stroke-width="0.9"/>
<path d="M53.6 432.6H57.8" stroke="#202020" stroke-width="1.1"/>
<path d="M76.6 427V439.3H88.9" stroke="#101010" stroke-width="0.9" fill="none"/>
<path d="M76.6 427H85L88.9 430.8V439.3" stroke="#2222c0" stroke-width="0.8" fill="none"/>
<circle cx="80.30" cy="427.10" r="0.6" fill="#2222c0" stroke="#2222c0" stroke-width="0.9"/>
<circle cx="85.00" cy="427.10" r="0.6" fill="#2222c0" stroke="#2222c0" stroke-width="0.9"/>
<circle cx="88.90" cy="431.30" r="0.6" fill="#2222c0" stroke="#2222c0" stroke-width="0.9"/>
<circle cx="88.90" cy="435.20" r="0.6" fill="#2222c0" stroke="#2222c0" stroke-width="0.9"/>
<rect x="76" y="426.2" width="1.2" height="1.6" fill="#e01010"/><rect x="88.2" y="438.4" width="1.4" height="1.4" fill="#e01010"/>
<path d="M80.4 433.7H84.4M82.4 431.7V435.7" stroke="#000" stroke-width="0.9"/>
<path d="M101.7 426.4L107.9 430.4M114.1 426.4L107.9 430.4M101.7 439L107.9 434.8M114.1 439L107.9 434.8M107.9 430.4V434.8" stroke="#2222c0" stroke-width="0.8" fill="none"/>
<path d="M107.9 431.4V433.8" stroke="#ff6060" stroke-width="1.5"/>
<circle cx="104.00" cy="426.70" r="0.6" fill="#2222c0" stroke="#2222c0" stroke-width="0.9"/>
<circle cx="112.00" cy="426.70" r="0.6" fill="#2222c0" stroke="#2222c0" stroke-width="0.9"/>
<circle cx="104.00" cy="438.70" r="0.6" fill="#2222c0" stroke="#2222c0" stroke-width="0.9"/>
<circle cx="112.00" cy="438.70" r="0.6" fill="#2222c0" stroke="#2222c0" stroke-width="0.9"/>
<circle cx="107.90" cy="430.30" r="0.6" fill="#2222c0" stroke="#2222c0" stroke-width="0.9"/>
<circle cx="107.90" cy="434.90" r="0.6" fill="#2222c0" stroke="#2222c0" stroke-width="0.9"/>
<path d="M102.6 432.5L105 430.8V434.2Z M113.2 432.5L110.8 430.8V434.2Z" fill="#000"/>
<path d="M100.8 428.5V437.5M115 428.5V437.5" stroke="#9a9a9a" stroke-width="0.7" stroke-dasharray="0.8 0.8"/>
<polygon points="131.50,426.20 136.50,426.20 140.40,430.30 140.40,434.50 136.50,438.60 131.50,438.60 127.60,434.50 127.60,430.30" fill="none" stroke="#2222c0" stroke-width="0.7"/>
<circle cx="131.50" cy="426.20" r="0.9" fill="#b8b8e0" stroke="#2222c0" stroke-width="0.9"/>
<circle cx="136.50" cy="426.20" r="0.9" fill="#b8b8e0" stroke="#2222c0" stroke-width="0.9"/>
<circle cx="140.40" cy="430.30" r="0.9" fill="#b8b8e0" stroke="#2222c0" stroke-width="0.9"/>
<circle cx="140.40" cy="434.50" r="0.9" fill="#b8b8e0" stroke="#2222c0" stroke-width="0.9"/>
<circle cx="136.50" cy="438.60" r="0.9" fill="#b8b8e0" stroke="#2222c0" stroke-width="0.9"/>
<circle cx="131.50" cy="438.60" r="0.9" fill="#b8b8e0" stroke="#2222c0" stroke-width="0.9"/>
<circle cx="127.60" cy="434.50" r="0.9" fill="#b8b8e0" stroke="#2222c0" stroke-width="0.9"/>
<circle cx="127.60" cy="430.30" r="0.9" fill="#b8b8e0" stroke="#2222c0" stroke-width="0.9"/>
<path d="M130.3 435.6L138 428" stroke="#ff4848" stroke-width="1.2" stroke-dasharray="1.1 1.3"/>
<polygon points="157.60,426.20 162.60,426.20 166.50,430.30 166.50,434.50 162.60,438.60 157.60,438.60 153.70,434.50 153.70,430.30" fill="none" stroke="#2222c0" stroke-width="0.7"/>
<circle cx="157.60" cy="426.20" r="0.9" fill="#b8b8e0" stroke="#2222c0" stroke-width="0.9"/>
<circle cx="162.60" cy="426.20" r="0.9" fill="#b8b8e0" stroke="#2222c0" stroke-width="0.9"/>
<circle cx="166.50" cy="430.30" r="0.9" fill="#b8b8e0" stroke="#2222c0" stroke-width="0.9"/>
<circle cx="166.50" cy="434.50" r="0.9" fill="#b8b8e0" stroke="#2222c0" stroke-width="0.9"/>
<circle cx="162.60" cy="438.60" r="0.9" fill="#b8b8e0" stroke="#2222c0" stroke-width="0.9"/>
<circle cx="157.60" cy="438.60" r="0.9" fill="#b8b8e0" stroke="#2222c0" stroke-width="0.9"/>
<circle cx="153.70" cy="434.50" r="0.9" fill="#b8b8e0" stroke="#2222c0" stroke-width="0.9"/>
<circle cx="153.70" cy="430.30" r="0.9" fill="#b8b8e0" stroke="#2222c0" stroke-width="0.9"/>
<path d="M158.4 434.4L162.2 430.8" stroke="#000" stroke-width="1"/><path d="M163.6 429.4V433L160 429.4Z M156.9 435.8V432.2L160.5 435.8Z" fill="#000"/>
<ellipse cx="186.2" cy="432.2" rx="6.2" ry="6.8" fill="none" stroke="#2222c0" stroke-width="0.8"/>
<path d="M186.2 425.5V439" stroke="#2222c0" stroke-width="0.7"/>
<circle cx="186.20" cy="425.50" r="0.9" fill="#b8b8e0" stroke="#2222c0" stroke-width="0.9"/>
<circle cx="186.20" cy="439.00" r="0.9" fill="#b8b8e0" stroke="#2222c0" stroke-width="0.9"/>
<circle cx="179.80" cy="429.60" r="0.9" fill="#b8b8e0" stroke="#2222c0" stroke-width="0.9"/>
<circle cx="179.80" cy="434.80" r="0.9" fill="#b8b8e0" stroke="#2222c0" stroke-width="0.9"/>
<circle cx="192.60" cy="429.60" r="0.9" fill="#b8b8e0" stroke="#2222c0" stroke-width="0.9"/>
<circle cx="192.60" cy="434.80" r="0.9" fill="#b8b8e0" stroke="#2222c0" stroke-width="0.9"/>
<path d="M185.4 432.4V435.2H182.6Z M187 432V429.2H189.8Z" fill="#000"/><path d="M182.4 432.2L184.4 434.2M190 432.2L188 430.2" stroke="#000" stroke-width="0.8"/>
<path d="M205.3 429.6H219.4" stroke="#2222c0" stroke-width="0.9"/>
<circle cx="206.20" cy="429.60" r="0.9" fill="#b8b8e0" stroke="#2222c0" stroke-width="0.9"/>
<circle cx="218.40" cy="429.60" r="0.9" fill="#b8b8e0" stroke="#2222c0" stroke-width="0.9"/>
<circle cx="212.40" cy="429.60" r="0.9" fill="#e01040" stroke="#2222c0" stroke-width="0.9"/>
<path d="M205.3 435H209.5M207.4 432.9V437.1" stroke="#000" stroke-width="0.8"/>
<path transform="translate(212.4,430) scale(1.0)" d="M0 0V6.4L1.5 5L2.8 7.8L4 7.2L2.7 4.6H4.7Z" fill="#000"/>
<path d="M231.1 429.6H245.7" stroke="#2222c0" stroke-width="0.9"/>
<circle cx="232.40" cy="429.60" r="0.9" fill="#b8b8e0" stroke="#2222c0" stroke-width="0.9"/>
<circle cx="244.60" cy="429.60" r="0.9" fill="#b8b8e0" stroke="#2222c0" stroke-width="0.9"/>
<circle cx="238.50" cy="429.60" r="0.9" fill="#e01040" stroke="#2222c0" stroke-width="0.9"/>
<path d="M232 435H235.6" stroke="#404040" stroke-width="1"/>
<path transform="translate(238.7,430.2) scale(1.0)" d="M0 0V6.4L1.5 5L2.8 7.8L4 7.2L2.7 4.6H4.7Z" fill="#000"/>
<path d="M257.3 426.4H265L267.8 429.4" stroke="#2222c0" stroke-width="0.9" fill="none"/><path d="M267.8 429.4L270.1 438.4" stroke="#2222c0" stroke-width="0.6" opacity="0.5" fill="none"/>
<circle cx="258.60" cy="426.40" r="0.9" fill="#b8b8e0" stroke="#2222c0" stroke-width="0.9"/>
<circle cx="264.40" cy="426.40" r="0.9" fill="#b8b8e0" stroke="#2222c0" stroke-width="0.9"/>
<circle cx="267.80" cy="429.40" r="0.9" fill="#e01040" stroke="#2222c0" stroke-width="0.9"/>
<circle cx="270.10" cy="438.40" r="0.9" fill="#2222c0" stroke="#2222c0" stroke-width="0.9"/>
<path d="M261.4 434.8L264.4 432.2" stroke="#000" stroke-width="0.9"/><path d="M265.6 431V434L262.6 431Z M260.2 436V433L263.2 436Z" fill="#000"/>
<path transform="translate(267.6,430) scale(0.95)" d="M0 0V6.4L1.5 5L2.8 7.8L4 7.2L2.7 4.6H4.7Z" fill="#000"/>
<path d="M292.3 429.7L290.9 423.4M292.3 429.7L299 432M289 433.3L282.4 432M289 433.3L290.9 440" stroke="#2222c0" stroke-width="0.8" fill="none"/>
<path d="M292.3 429.7L289 433.3" stroke="#f04080" stroke-width="1.1"/>
<rect x="290.00" y="422.50" width="1.8" height="1.8" fill="#2222c0"/>
<rect x="298.10" y="431.10" width="1.8" height="1.8" fill="#2222c0"/>
<rect x="281.50" y="431.10" width="1.8" height="1.8" fill="#2222c0"/>
<rect x="290.00" y="439.10" width="1.8" height="1.8" fill="#2222c0"/>
<circle cx="292.30" cy="429.70" r="0.8" fill="#2222c0" stroke="#2222c0" stroke-width="0.9"/>
<circle cx="289.00" cy="433.30" r="0.8" fill="#2222c0" stroke="#2222c0" stroke-width="0.9"/>
<path d="M295.9 426.2v2.2l-2.2-2.2Z M285.3 436.8v-2.2l2.2 2.2Z" fill="#000"/>
<path d="M318.5 429.7L317.09999999999997 423.4M318.5 429.7L325.2 432M315.2 433.3L308.59999999999997 432M315.2 433.3L317.09999999999997 440" stroke="#2222c0" stroke-width="0.8" fill="none"/>
<path d="M318.5 429.7L315.2 433.3" stroke="#f04080" stroke-width="1.1"/>
<rect x="316.20" y="422.50" width="1.8" height="1.8" fill="#2222c0"/>
<rect x="324.30" y="431.10" width="1.8" height="1.8" fill="#2222c0"/>
<rect x="307.70" y="431.10" width="1.8" height="1.8" fill="#2222c0"/>
<rect x="316.20" y="439.10" width="1.8" height="1.8" fill="#2222c0"/>
<circle cx="318.50" cy="429.70" r="0.8" fill="#2222c0" stroke="#2222c0" stroke-width="0.9"/>
<circle cx="315.20" cy="433.30" r="0.8" fill="#2222c0" stroke="#2222c0" stroke-width="0.9"/>
<path d="M320.8 427.6v-2.2l2.2 2.2Z M312.8 435.4v2.2l-2.2-2.2Z" fill="#000"/>
<path d="M335 431.7H339.4" stroke="#707070" stroke-width="0.9"/>
<path d="M339.2 426.2L342.9 429.6H347.1L348.8 427.8C350.9 428.8 350.9 435.4 348.8 436.3L347.1 434.2H342.9L339.2 437.6Z" fill="#00bcbc" stroke="#201010" stroke-width="0.8" stroke-linejoin="round"/>
<path d="M340.3 428.6V435.2M344.4 430.6V433.2M348.6 429.6V434.6" stroke="#9af4f4" stroke-width="1" fill="none" opacity="0.8"/>
<path d="M20.599999999999998 460.3V447.7H160.4" stroke="#808080" stroke-width="0.8" fill="none"/>
<path d="M160.0 447.3V459.90000000000003H20.2" stroke="#fff" stroke-width="0.8" fill="none"/>
<path d="M163.8 460.3V447.7H189.5" stroke="#808080" stroke-width="0.8" fill="none"/>
<path d="M189.1 447.3V459.90000000000003H163.4" stroke="#fff" stroke-width="0.8" fill="none"/>
<path d="M192.5 460.3V447.7H228.8" stroke="#808080" stroke-width="0.8" fill="none"/>
<path d="M228.4 447.3V459.90000000000003H192.1" stroke="#fff" stroke-width="0.8" fill="none"/>
<path d="M246.20000000000002 460.3V447.7H696" stroke="#808080" stroke-width="0.8" fill="none"/>
<path d="M695.6 447.3V459.90000000000003H245.8" stroke="#fff" stroke-width="0.8" fill="none"/>
<path d="M10.7 450L13.4 455.4H12V458.2H9.4V455.4H8Z" fill="#fff" stroke="#000" stroke-width="0.8"/>
<text x="21.9" y="456.8" font-size="7.6" stroke="#000" stroke-width="0.3" textLength="29.6" lengthAdjust="spacingAndGlyphs">134.6 -11.4</text>
<text x="172" y="456.8" font-size="7.6" stroke="#000" stroke-width="0.3" textLength="9.6" lengthAdjust="spacingAndGlyphs">0%</text>
<text x="193.7" y="456.8" font-size="7.6" stroke="#000" stroke-width="0.3" textLength="3.4" lengthAdjust="spacingAndGlyphs">0</text>
<rect x="236.7" y="449.2" width="3.4" height="2.4" rx="0.6" fill="#0648e0"/><path d="M236 452.8H240.2V457H241V458.3H235.8V457H237V454.1H236Z" fill="#0648e0"/>
<text y="457.3" font-size="8" stroke="#000" stroke-width="0.2"><tspan x="247.7" textLength="88.7" lengthAdjust="spacingAndGlyphs">&quot;Add sub-polygon to other&quot;</tspan> <tspan x="339" textLength="19.8" lengthAdjust="spacingAndGlyphs">mode.</tspan> <tspan x="361.4" textLength="12.3" lengthAdjust="spacingAndGlyphs">Use</tspan> <tspan x="375.8" textLength="24.9" lengthAdjust="spacingAndGlyphs">left-click</tspan> <tspan x="404" textLength="8.1" lengthAdjust="spacingAndGlyphs">for</tspan> <tspan x="414.9" textLength="19.8" lengthAdjust="spacingAndGlyphs">adding</tspan> <tspan x="438" textLength="15.5" lengthAdjust="spacingAndGlyphs">point</tspan> <tspan x="456.5" textLength="5.9" lengthAdjust="spacingAndGlyphs">to</tspan> <tspan x="465.1" textLength="25.8" lengthAdjust="spacingAndGlyphs">polygon,</tspan> <tspan x="494.2" textLength="30.7" lengthAdjust="spacingAndGlyphs">right-click</tspan> <tspan x="527.6" textLength="6" lengthAdjust="spacingAndGlyphs">to</tspan> <tspan x="536.3" textLength="15.7" lengthAdjust="spacingAndGlyphs">close</tspan> <tspan x="555.3" textLength="26" lengthAdjust="spacingAndGlyphs">polygon</tspan></text>
<path d="M695.4 452.4L688.4 459.6M695.4 455L690.8 459.6M695.4 457.6L693.2 459.6" stroke="#808080" stroke-width="0.8"/>
</svg></body></html>
